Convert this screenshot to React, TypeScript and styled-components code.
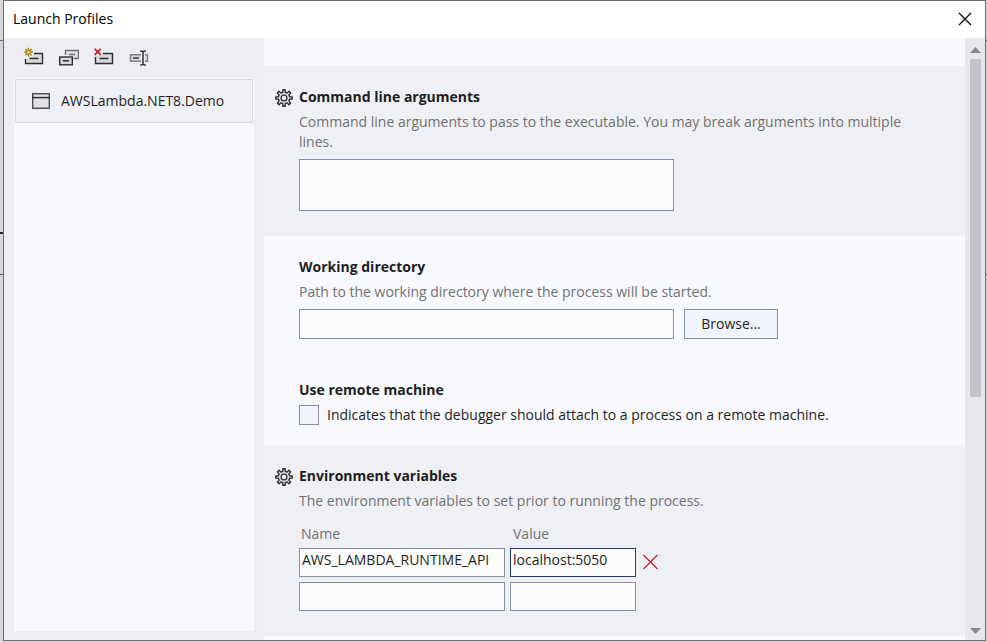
import React, { useState } from "react";
import styled, { createGlobalStyle, css } from "styled-components";

const color = {
  text: "#1e1e1e",
  muted: "#717171",
  chrome: "#eeedf1",
  band: "#eff0f5",
  surface: "#f8f9fe",
  control: "#fcfcfc",
  border: "#858fa3",
  focus: "#1f3b7d",
};

const GlobalStyle = createGlobalStyle`
  *, *::before, *::after { box-sizing: border-box; }
  body {
    margin: 0;
    color: ${color.text};
    font: 14px/20px "Open Sans", "Noto Sans", sans-serif;
  }
  button, input, textarea { font: inherit; color: inherit; margin: 0; border-radius: 0; }
  h1, h2, p { margin: 0; }
`;

const Desktop = styled.div`
  height: 100vh;
  padding: 0 1px 1px 3px;
  background:
    linear-gradient(#666, #666) 0 40px / 100% 1px no-repeat,
    linear-gradient(#222, #222) 0 232px / 3px 2px no-repeat,
    linear-gradient(#666, #666) 0 274px / 100% 1px no-repeat,
    #d6d6d4;
`;

const Dialog = styled.main`
  height: 100%;
  display: flex;
  flex-direction: column;
  border: 1px solid #6c6c6e;
  background: ${color.chrome};
`;

const TitleBar = styled.header`
  flex: none;
  display: flex;
  align-items: center;
  justify-content: space-between;
  height: 37px;
  padding: 0 12px 1px 9px;
  background: #fff;
`;

const Title = styled.h1`
  font-size: 14px;
  font-weight: 400;
  color: #000;
`;

const IconButton = styled.button`
  display: flex;
  align-items: center;
  justify-content: center;
  padding: 0;
  border: 0;
  background: none;
`;

const Body = styled.div`
  flex: 1;
  min-height: 0;
  display: flex;
`;

const Sidebar = styled.aside`
  flex: none;
  width: 260px;
  display: flex;
  flex-direction: column;
  padding: 0 10px 9px;
`;

const Toolbar = styled.div`
  display: flex;
  align-items: center;
  gap: 15px;
  height: 40px;
  padding: 0 10px 2px;
`;

const ProfileList = styled.ul`
  flex: 1;
  margin: 0;
  padding: 1px;
  list-style: none;
  background: ${color.surface};
`;

const ProfileButton = styled.button`
  display: flex;
  align-items: center;
  gap: 11px;
  width: 100%;
  height: 44px;
  padding: 0 16px;
  border: 1px solid #d8d9de;
  background: ${color.band};
  white-space: nowrap;
`;

const Settings = styled.div`
  flex: 1;
  min-width: 0;
  padding-top: 28px;
  overflow: hidden;
  background: ${color.surface};
`;

const Section = styled.section<{ $shaded?: boolean }>`
  display: flex;
  flex-direction: column;
  gap: 41px;
  padding: 21px 40px 25px 35px;
  ${(p) =>
    p.$shaded
      ? css`
          background: ${color.band};
        `
      : css`
          padding-bottom: 20px;
        `}
`;

const SectionTitle = styled.h2`
  display: flex;
  align-items: center;
  gap: 6px;
  margin-bottom: 5px;
  font-size: 14px;
  font-weight: 700;

  svg {
    margin: 2px 0 0 -24px;
  }
`;

const Description = styled.p`
  margin-bottom: 7px;
  color: ${color.muted};
`;

const field = css`
  display: block;
  padding: 1px 2px 5px;
  border: 1px solid ${color.border};
  background: ${color.control};
  outline: none;
  &:focus {
    border-color: ${color.focus};
  }
`;

const ArgumentsBox = styled.textarea`
  ${field}
  width: 375px;
  max-width: 100%;
  height: 52px;
  resize: none;
`;

const FieldRow = styled.div`
  display: flex;
  gap: 10px;
`;

const PathInput = styled.input`
  ${field}
  width: 375px;
  min-width: 0;
  height: 30px;
`;

const BrowseButton = styled.button`
  width: 94px;
  height: 30px;
  padding: 0;
  border: 1px solid ${color.border};
  background: #f1f4fc;
`;

const CheckLabel = styled.label`
  display: flex;
  align-items: center;
  gap: 8px;
`;

const CheckBox = styled.input`
  appearance: none;
  width: 20px;
  height: 20px;
  border: 1px solid ${color.border};
  background: #f1f4fc;
  &:checked {
    background: ${color.focus};
  }
`;

const VariableTable = styled.table`
  margin-top: 13px;
  border-collapse: collapse;

  th {
    padding: 0 2px 4px;
    font-weight: 400;
    text-align: left;
    color: ${color.muted};
  }
  th + th {
    padding-left: 3px;
  }
  td {
    padding: 0 5px 5px 0;
  }
  td:nth-child(3) {
    padding-bottom: 7px;
  }
  tr:last-child td {
    padding-bottom: 0;
  }
`;

const VariableInput = styled.input<{ $wide?: boolean; $active?: boolean }>`
  ${field}
  width: ${(p) => (p.$wide ? 206 : 126)}px;
  height: 29px;
  padding-top: 0;
  padding-bottom: 6px;
  border-color: ${(p) => (p.$active ? color.focus : color.border)};
`;

const ScrollBar = styled.div`
  flex: none;
  width: 20px;
  display: flex;
  flex-direction: column;
  align-items: center;
  gap: 4px;
  padding: 8px 0 4px;
  background: #e7e7ec;
`;

const ScrollTrack = styled.div`
  flex: 1;
  width: 11px;
`;

const ScrollThumb = styled.div`
  height: 60%;
  background: #c2c3c9;
`;

function CloseIcon() {
  return (
    <svg width="16" height="16" viewBox="0 0 16 16" aria-hidden="true">
      <path d="M2 2l12 12M14 2L2 14" stroke="#000" strokeWidth="1.2" />
    </svg>
  );
}

function RemoveIcon() {
  return (
    <svg width="20" height="20" viewBox="0 0 20 20" aria-hidden="true">
      <path d="M2.500 3l14 14M16.500 3l-14 14" stroke="#c8202f" strokeWidth="1.3" />
    </svg>
  );
}

function NewProfileIcon() {
  return (
    <svg width="20" height="20" viewBox="0 0 20 20" fill="none" aria-hidden="true">
      <path d="M10 6.500h8.500v10h-17V12L8 10z" fill="#d9d9dc" />
      <path d="M10 6.500h8.500v10h-17V12M5.500 11.500h9" stroke="#2f2f31" strokeWidth="1.4" />
      <path
        d="M4.500.700v2.500M4.500 7.200v2.500M0 5.200h2.500M6.500 5.200H9M1.300 2l1.800 1.800M5.900 6.600l1.800 1.800M7.700 2L5.900 3.800M3.100 6.600L1.300 8.400"
        stroke="#a87400"
        strokeWidth="1.3"
      />
      <circle cx="4.500" cy="5.200" r="1.900" fill="#f3e6c4" stroke="#a87400" strokeWidth="1.1" />
    </svg>
  );
}

function DuplicateIcon() {
  return (
    <svg width="20" height="20" viewBox="0 0 20 20" fill="none" aria-hidden="true">
      <path d="M6.500 8V3.500h13v8h-5V8z" fill="#dfdfe2" />
      <path d="M6.500 8V3.500h13v8h-5M10 7.500h6" stroke="#707073" strokeWidth="1.4" />
      <rect x=".7" y="10" width="12.600" height="7.800" fill="#d9d9dc" stroke="#2f2f31" strokeWidth="1.4" />
      <path d="M4 13.800h6" stroke="#2f2f31" strokeWidth="1.5" />
    </svg>
  );
}

function DeleteIcon() {
  return (
    <svg width="20" height="20" viewBox="0 0 20 20" fill="none" aria-hidden="true">
      <path d="M9 6.500h9.500v10h-17V10z" fill="#d9d9dc" />
      <path d="M9 6.500h9.500v10h-17V10M5.500 11.500h9" stroke="#2f2f31" strokeWidth="1.4" />
      <path d="M.7 1.900l6 6M6.700 1.900l-6 6" stroke="#c8102a" strokeWidth="1.6" />
    </svg>
  );
}

function RenameIcon() {
  return (
    <svg width="20" height="20" viewBox="0 0 20 20" fill="none" aria-hidden="true">
      <path d="M12 7.700H1.500v6.600H12zM16 7.700h2.500v6.600H16z" fill="#d9d9dc" />
      <path d="M12 7.700H1.500v6.600H12M16 7.700h2.500v6.600H16" stroke="#808083" strokeWidth="1.4" />
      <path d="M4 11h6" stroke="#4c4c4e" strokeWidth="1.7" />
      <path
        d="M11.200 4c1.800 0 2.800.3 2.800 1.300 0-1 1-1.300 2.800-1.300M14 5v12M11.200 18c1.800 0 2.800-.3 2.800-1.300 0 1 1 1.300 2.800 1.300"
        stroke="#2f2f31"
        strokeWidth="1.5"
      />
    </svg>
  );
}

function WindowIcon() {
  return (
    <svg width="18" height="16" viewBox="0 0 18 16" aria-hidden="true">
      <rect x=".7" y=".7" width="16.600" height="14.600" fill="#e0e1e4" stroke="#4c4c4e" strokeWidth="1.400" />
      <path d="M0 4.600h18" stroke="#2f2f31" strokeWidth="1.500" />
    </svg>
  );
}

function gearOutline(teeth: number, outer: number, inner: number) {
  const step = (Math.PI * 2) / teeth;
  const points: string[] = [];
  for (let i = 0; i < teeth; i++) {
    const mid = i * step;
    const corners: [number, number][] = [
      [-0.28, inner],
      [-0.18, outer],
      [0.18, outer],
      [0.28, inner],
    ];
    corners.forEach(([offset, radius]) => {
      const a = mid + offset * step;
      points.push(`${(9 + radius * Math.sin(a)).toFixed(2)} ${(9 - radius * Math.cos(a)).toFixed(2)}`);
    });
  }
  return `M${points.join("L")}Z`;
}

const gearPath = gearOutline(8, 8.3, 5.8);

function GearIcon() {
  return (
    <svg width="18" height="18" viewBox="0 0 18 18" fill="none" aria-hidden="true">
      <path d={gearPath} fill="#dcdce0" stroke="#2f2f31" strokeWidth="1.400" strokeLinejoin="round" />
      <circle cx="9" cy="9" r="2.900" fill="#eff0f5" stroke="#2f2f31" strokeWidth="1.300" />
    </svg>
  );
}

function ScrollArrow({ down }: { down?: boolean }) {
  return (
    <svg width="11" height="9" viewBox="0 0 11 9" aria-hidden="true">
      <path d={down ? "M0 1h11L5.500 7z" : "M0 7h11L5.500 1z"} fill="#868999" />
    </svg>
  );
}

const tools = [
  { label: "New profile", icon: <NewProfileIcon /> },
  { label: "Duplicate profile", icon: <DuplicateIcon /> },
  { label: "Delete profile", icon: <DeleteIcon /> },
  { label: "Rename profile", icon: <RenameIcon /> },
];

export default function App() {
  const [remote, setRemote] = useState(false);

  return (
    <>
      <GlobalStyle />
      <Desktop>
        <Dialog>
          <TitleBar>
            <Title>Launch Profiles</Title>
            <IconButton aria-label="Close">
              <CloseIcon />
            </IconButton>
          </TitleBar>
          <Body>
            <Sidebar>
              <Toolbar role="toolbar" aria-label="Profiles">
                {tools.map((tool) => (
                  <IconButton key={tool.label} aria-label={tool.label}>
                    {tool.icon}
                  </IconButton>
                ))}
              </Toolbar>
              <ProfileList>
                <li>
                  <ProfileButton>
                    <WindowIcon />
                    AWSLambda.NET8.Demo
                  </ProfileButton>
                </li>
              </ProfileList>
            </Sidebar>
            <Settings>
              <Section $shaded>
                <div>
                  <SectionTitle id="arguments">
                    <GearIcon />
                    Command line arguments
                  </SectionTitle>
                  <Description>
                    Command line arguments to pass to the executable. You may break arguments into multiple lines.
                  </Description>
                  <ArgumentsBox aria-labelledby="arguments" />
                </div>
              </Section>
              <Section>
                <div>
                  <SectionTitle id="directory">Working directory</SectionTitle>
                  <Description>Path to the working directory where the process will be started.</Description>
                  <FieldRow>
                    <PathInput type="text" aria-labelledby="directory" />
                    <BrowseButton>Browse...</BrowseButton>
                  </FieldRow>
                </div>
                <div>
                  <SectionTitle>Use remote machine</SectionTitle>
                  <CheckLabel>
                    <CheckBox type="checkbox" checked={remote} onChange={(e) => setRemote(e.target.checked)} />
                    Indicates that the debugger should attach to a process on a remote machine.
                  </CheckLabel>
                </div>
              </Section>
              <Section $shaded>
                <div>
                  <SectionTitle>
                    <GearIcon />
                    Environment variables
                  </SectionTitle>
                  <Description>The environment variables to set prior to running the process.</Description>
                  <VariableTable>
                    <thead>
                      <tr>
                        <th id="name">Name</th>
                        <th id="value">Value</th>
                      </tr>
                    </thead>
                    <tbody>
                      <tr>
                        <td>
                          <VariableInput $wide aria-labelledby="name" defaultValue="AWS_LAMBDA_RUNTIME_API" />
                        </td>
                        <td>
                          <VariableInput $active aria-labelledby="value" defaultValue="localhost:5050" />
                        </td>
                        <td>
                          <IconButton aria-label="Remove variable">
                            <RemoveIcon />
                          </IconButton>
                        </td>
                      </tr>
                      <tr>
                        <td>
                          <VariableInput $wide aria-labelledby="name" />
                        </td>
                        <td>
                          <VariableInput aria-labelledby="value" />
                        </td>
                      </tr>
                    </tbody>
                  </VariableTable>
                </div>
              </Section>
            </Settings>
            <ScrollBar aria-hidden="true">
              <ScrollArrow />
              <ScrollTrack>
                <ScrollThumb />
              </ScrollTrack>
              <ScrollArrow down />
            </ScrollBar>
          </Body>
        </Dialog>
      </Desktop>
    </>
  );
}
